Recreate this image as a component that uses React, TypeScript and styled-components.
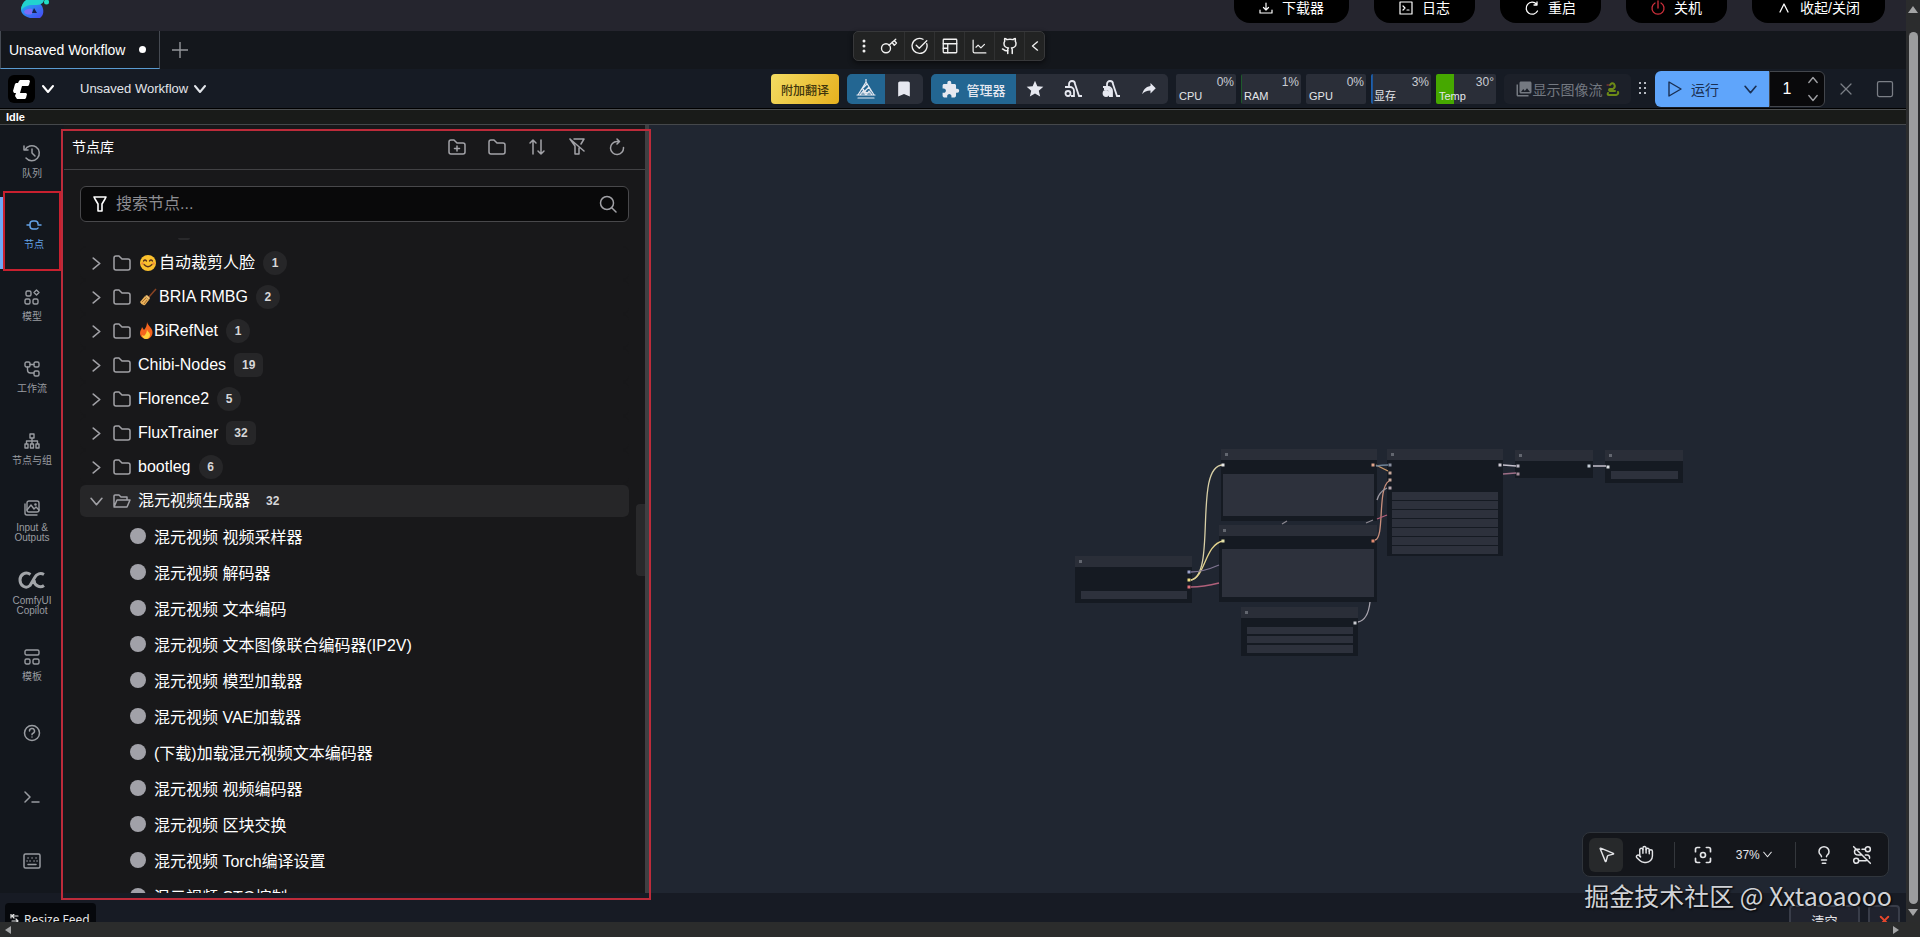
import React from "react";
import styled, { createGlobalStyle, css } from "styled-components";
import {
  ChartLine, Github, Hand, Lightbulb, X, Square, MousePointer2,
} from "lucide-react";
import { MdBookmark, MdExtension, MdStar, MdPhotoLibrary } from "react-icons/md";

const GlobalStyle = createGlobalStyle`
  * { box-sizing: border-box; }
  body { margin: 0; background: #14171d; overflow: hidden; }
  button, input { font: inherit; color: inherit; }
  button { border: 0; padding: 0; background: none; cursor: pointer; }
  svg { display: block; flex: none; }
`;

/* ---------- page frame ---------- */

const Viewport = styled.div`
  display: grid;
  grid-template-columns: minmax(0, 1fr) 14px;
  grid-template-rows: minmax(0, 1fr) 15px;
  height: 100vh;
  color: #fff;
  font-family: "Liberation Sans", "Noto Sans CJK SC", sans-serif;
`;

const Page = styled.div`
  display: flex;
  flex-direction: column;
  min-height: 0;
  overflow: hidden;
`;

const VerticalScroll = styled.div`
  display: flex;
  flex-direction: column;
  align-items: center;
  justify-content: space-between;
  padding: 6px 0;
  background: #2b2c2d;
`;

const VerticalThumb = styled.div`
  flex: 1;
  width: 9px;
  margin: 18px 0 4px;
  border-radius: 5px;
  background: #9c9d9e;
`;

const HorizontalScroll = styled.div`
  grid-column: 1 / -1;
  display: flex;
  align-items: center;
  justify-content: space-between;
  padding: 0 19px 0 3px;
  background: #2b2c2c;
`;

/* ---------- top bar ---------- */

const TopBar = styled.header`
  display: flex;
  align-items: flex-start;
  justify-content: space-between;
  flex: none;
  height: 31px;
  padding: 0 21px 0 20px;
  background: #25252e;
`;

const TopActions = styled.nav`
  display: flex;
  gap: 25px;
`;

const TopButton = styled.button`
  display: flex;
  align-items: flex-end;
  gap: 8px;
  height: 23px;
  padding: 0 25px 7px 24px;
  border-radius: 0 0 16px 16px;
  background: #000;
  font-size: 14px;
  line-height: 16px;
  white-space: nowrap;
`;

/* ---------- tabs ---------- */

const TabBar = styled.div`
  display: grid;
  grid-template-columns: minmax(0, 1fr) auto minmax(0, 1fr);
  flex: none;
  height: 38px;
  padding-right: 8px;
  background: #14171c;
`;

const TabGroup = styled.div`
  display: flex;
  align-items: center;
`;

const Tab = styled.button`
  display: flex;
  align-items: center;
  gap: 14px;
  height: 38px;
  width: 160px;
  padding: 0 8px;
  border: 1px solid #454a52;
  border-top: 0;
  border-bottom: 1px solid #5a9bd0;
  font-size: 14px;
  line-height: 16px;
  white-space: nowrap;
`;

const UnsavedDot = styled.span`
  width: 7px;
  height: 7px;
  border-radius: 50%;
  background: #fff;
`;

const AddTab = styled.button`
  margin-left: 12px;
  color: #94979b;
`;

const FloatingTools = styled.div`
  display: flex;
  align-items: center;
  align-self: start;
  height: 30px;
  border: 1px solid #37383a;
  border-radius: 5px;
  background: #222323;
  box-shadow: 0 2px 5px #0a0b0d;
`;

const FloatingButton = styled.button<{ $narrow?: boolean }>`
  display: flex;
  align-items: center;
  justify-content: center;
  width: ${(p) => (p.$narrow ? 20 : 30)}px;
  height: 28px;
  color: #f1f1f1;
  & + & { border-left: 1px solid #303132; }
  &:nth-child(2) { border-left: 0; }
`;

/* ---------- menu bar ---------- */

const MenuBar = styled.div`
  display: flex;
  align-items: center;
  flex: none;
  height: 40px;
  padding-right: 11px;
  padding-left: 8px;
  background: #161b24;
`;

const ComfyMenu = styled.button`
  display: flex;
  align-items: center;
  gap: 7px;
  margin-right: 26px;
`;

const ComfyLogo = styled.span`
  display: flex;
  align-items: center;
  justify-content: center;
  width: 27px;
  height: 28px;
  border-radius: 6px;
  background: #000;
`;

const WorkflowMenu = styled.button`
  display: flex;
  align-items: center;
  gap: 6px;
  color: #e2e5ea;
  font-size: 13px;
  line-height: 16px;
`;

const MenuRight = styled.div`
  display: flex;
  align-items: center;
  gap: 8px;
  margin-left: auto;
`;

const TranslateButton = styled.button`
  width: 68px;
  height: 30px;
  border-radius: 4px;
  background: linear-gradient(120deg, #f3dc62, #e6b01f);
  color: #40350c;
  font-size: 12px;
  font-weight: 500;
`;

const ToolGroup = styled.div`
  display: flex;
  overflow: hidden;
  border-radius: 5px;
  background: #2a2e38;
`;

const ToolButton = styled.button<{ $primary?: boolean; $wide?: boolean }>`
  display: flex;
  align-items: center;
  justify-content: center;
  gap: 6px;
  width: ${(p) => (p.$wide ? 85 : 38)}px;
  height: 30px;
  background: ${(p) => (p.$primary ? "#236692" : "transparent")};
  color: #e6e8f0;
  font-size: 13px;
  font-weight: 500;
  white-space: nowrap;
`;

const Monitors = styled.div`
  display: flex;
  gap: 5px;
`;

const Monitor = styled.div<{ $fill: number; $tone: string }>`
  display: grid;
  align-content: space-between;
  width: 60px;
  height: 30px;
  padding: 2px 2px 1px 3px;
  border-radius: 2px;
  background:
    linear-gradient(${(p) => p.$tone}, ${(p) => p.$tone}) left / ${(p) => p.$fill}% 100% no-repeat,
    #2a2e38;
  color: #e4e6ea;
  font-size: 11px;
  line-height: 13px;
  white-space: nowrap;
`;

const MonitorValue = styled.span`
  justify-self: end;
  color: #c9ccd3;
  font-size: 12px;
`;

const FeedButton = styled.button`
  display: flex;
  align-items: center;
  justify-content: center;
  width: 127px;
  height: 30px;
  border-radius: 5px;
  background: #1c2029;
  color: #747981;
  font-size: 14px;
  white-space: nowrap;
`;

const RunGroup = styled.div`
  display: flex;
  align-items: center;
`;

const RunButton = styled.button`
  display: flex;
  align-items: center;
  width: 114px;
  height: 36px;
  padding: 0 12px;
  border-radius: 6px 0 0 6px;
  background: #5fa5fb;
  color: #1a2f52;
  font-size: 14px;
  & > span { flex: 1; padding-left: 8px; text-align: left; }
`;

const BatchField = styled.label`
  display: flex;
  align-items: center;
  justify-content: space-between;
  width: 56px;
  height: 36px;
  padding: 0 6px 0 0;
  border: 1px solid #43464c;
  border-radius: 0 6px 6px 0;
  background: #09090b;
`;

const BatchInput = styled.input`
  width: 34px;
  padding: 0;
  border: 0;
  outline: 0;
  background: none;
  font-size: 16px;
  text-align: center;
`;

const Stepper = styled.span`
  display: grid;
  gap: 8px;
  color: #a0a1a5;
`;

const QueueControls = styled.div`
  display: flex;
  gap: 19px;
  margin-left: 3px;
  color: #7b7f86;
`;

const StatusBar = styled.div`
  flex: none;
  height: 16px;
  padding-left: 6px;
  border-top: 1px solid #4b4e50;
  border-bottom: 1px solid #45484b;
  background: #191b19;
  box-shadow: 0 -1px #000;
  font-size: 11px;
  font-weight: bold;
  line-height: 15px;
`;

/* ---------- workspace ---------- */

const Workspace = styled.main`
  display: flex;
  flex: 1;
  min-height: 0;
`;

const Sidebar = styled.nav`
  display: flex;
  flex-direction: column;
  flex: none;
  width: 64px;
  background: #13171d;
`;

const SideItem = styled.button<{ $active?: boolean; $small?: boolean }>`
  position: relative;
  display: flex;
  flex-direction: column;
  align-items: center;
  justify-content: center;
  gap: 7px;
  height: ${(p) => (p.$small ? 64 : 72)}px;
  color: #999ca1;
  font-size: 10px;
  line-height: 10px;
  ${(p) => p.$active && css`
    padding-left: 4px;
    box-shadow: inset 3px 0 #6fa8f5;
    color: #64a2e6;
  `}
`;

const SideMarker = styled.span`
  position: absolute;
  inset: -6px 3px -2px 3px;
  border: 2px solid #c8202f;
  pointer-events: none;
`;

const PanelMarker = styled.span`
  position: absolute;
  z-index: 2;
  inset: 4px -6px -7px -3px;
  border: 2px solid #bd2b3a;
  pointer-events: none;
`;

const PanelShell = styled.section`
  position: relative;
  display: flex;
  flex: none;
  width: 585px;
  border-right: 4px solid #3f3f42;
`;

const Panel = styled.div`
  position: relative;
  display: flex;
  flex: 1;
  flex-direction: column;
  min-width: 0;
  overflow: hidden;
  background: #18181a;
`;

const PanelHeader = styled.div`
  display: flex;
  align-items: center;
  justify-content: space-between;
  flex: none;
  height: 45px;
  padding: 0 19px 0 8px;
  border-bottom: 1px solid #414144;
`;

const PanelTitle = styled.h2`
  margin: 0;
  font-size: 14px;
  font-weight: 400;
  line-height: 20px;
`;

const PanelTools = styled.div`
  display: flex;
  gap: 22px;
  color: #a3a3a8;
`;

const SearchField = styled.label`
  display: flex;
  align-items: center;
  gap: 8px;
  flex: none;
  height: 36px;
  margin: 16px 16px 0;
  padding: 0 11px;
  border: 1px solid #48484b;
  border-radius: 6px;
  background: #09090a;
  color: #a1a1a6;
`;

const SearchInput = styled.input`
  flex: 1;
  min-width: 0;
  border: 0;
  padding: 0;
  outline: 0;
  background: none;
  font-size: 16px;
  &::placeholder { color: #8d8d92; opacity: 1; }
`;

/* The bar before the first row is the tail of a count badge scrolled out of view. */
const Tree = styled.ul`
  flex: 1;
  min-height: 0;
  margin: 16px 16px 0;
  padding: 0;
  overflow: hidden;
  list-style: none;
  font-size: 16px;
  line-height: 20px;
  &::before {
    content: "";
    display: block;
    width: 12px;
    height: 2px;
    margin: 0 0 6px 98px;
    border-radius: 0 0 6px 6px;
    background: #29292b;
  }
`;

const Branch = styled.li<{ $open?: boolean }>`
  display: flex;
  align-items: center;
  height: 34px;
  padding-left: 10px;
  border-top: 1px solid #18181a;
  border-bottom: 1px solid #18181a;
  border-radius: 6px;
  background: ${(p) => (p.$open ? "#262628" : "transparent")};
  color: #a1a1a6;
`;

const BranchLabel = styled.span<{ $emoji?: boolean }>`
  display: flex;
  align-items: center;
  margin-left: ${(p) => (p.$emoji ? 9 : 7)}px;
  color: #fff;
  white-space: nowrap;
`;

const Count = styled.span<{ $round?: boolean; $plain?: boolean }>`
  min-width: 24px;
  height: 24px;
  margin-left: 8px;
  padding: 0 ${(p) => (p.$round ? 0 : 8)}px;
  border-radius: ${(p) => (p.$round ? 12 : 6)}px;
  background: ${(p) => (p.$plain ? "transparent" : "#262628")};
  color: #d6d6d8;
  font-size: 12px;
  font-weight: bold;
  line-height: 24px;
  text-align: center;
`;

const FolderSlot = styled.span`
  margin-left: 10px;
`;

const Leaf = styled.li`
  display: flex;
  align-items: center;
  gap: 8px;
  height: 36px;
  padding-left: 50px;
  white-space: nowrap;
  &::before {
    content: "";
    width: 16px;
    height: 16px;
    border-radius: 50%;
    background: #a1a1a8;
  }
  & > span { padding-top: 3px; }
`;

const TreeThumb = styled.span`
  position: absolute;
  top: 379px;
  right: 0;
  width: 9px;
  height: 72px;
  border-radius: 4px 0 0 4px;
  background: #29292b;
`;

const Canvas = styled.section`
  position: relative;
  flex: 1;
  min-width: 0;
  background: #202631;
`;

const Graph = styled.svg`
  position: absolute;
  top: 305px;
  right: 206px;
`;

const CanvasTools = styled.div`
  position: absolute;
  right: 17px;
  bottom: 16px;
  display: flex;
  align-items: center;
  width: 307px;
  height: 45px;
  padding: 0 6px;
  border: 1px solid #30353c;
  border-radius: 8px;
  background: #14161b;
  color: #e4e5e8;
`;

const CanvasButton = styled.button<{ $on?: boolean; $width?: number }>`
  display: flex;
  align-items: center;
  justify-content: center;
  gap: 3px;
  width: ${(p) => p.$width ?? 35}px;
  height: 34px;
  border-radius: 6px;
  background: ${(p) => (p.$on ? "#27292b" : "transparent")};
  font-size: 12px;
`;

const Divider = styled.span`
  width: 1px;
  height: 26px;
  margin: 0 9px;
  background: #34373c;
`;

/* ---------- bottom strip ---------- */

const BottomBar = styled.footer`
  display: flex;
  align-items: flex-start;
  justify-content: space-between;
  flex: none;
  height: 29px;
  padding: 0 6px 0 5px;
  overflow: hidden;
  background: #171b24;
`;

const ResizeFeed = styled.button`
  display: flex;
  align-items: center;
  gap: 4px;
  height: 32px;
  width: 91px;
  margin-top: 10px;
  padding: 0 5px;
  border-radius: 4px;
  background: #06080c;
  color: #e4e4e4;
  font-family: "Noto Sans", sans-serif;
  font-size: 12px;
  white-space: nowrap;
`;

const FeedActions = styled.div`
  display: flex;
  gap: 8px;
  margin-top: 12px;
`;

const FeedAction = styled.button<{ $close?: boolean }>`
  display: flex;
  align-items: center;
  justify-content: center;
  width: ${(p) => (p.$close ? 32 : 71)}px;
  height: 30px;
  border: 2px solid #393d49;
  border-radius: 4px;
  background: #20232e;
  color: ${(p) => (p.$close ? "#e8472c" : "#e4e4e8")};
  font-size: 13px;
`;

const Watermark = styled.div`
  position: absolute;
  z-index: 3;
  right: 14px;
  bottom: -20px;
  color: #d0d2d6;
  font-family: "Noto Sans CJK SC", sans-serif;
  font-size: 25px;
  line-height: 36px;
  text-shadow: 1px 1px 2px #000;
  white-space: nowrap;
`;

/* ---------- icons ---------- */

type IconProps = { size?: number; children: React.ReactNode; width?: number; box?: string };

const Line = ({ size = 16, width = 2, box = "0 0 24 24", children }: IconProps) => (
  <svg width={size} height={size} viewBox={box} fill="none" stroke="currentColor" strokeWidth={width} strokeLinecap="round" strokeLinejoin="round" aria-hidden="true">
    {children}
  </svg>
);

const Chevron = ({ dir, size = 12, width = 2 }: { dir: "up" | "down" | "left" | "right"; size?: number; width?: number }) => {
  const d = { up: "M1 9l5-6 5 6", down: "M1 3l5 6 5-6", left: "M9 1L3 6l6 5", right: "M3 1l6 5-6 5" }[dir];
  return <Line size={size} width={width} box="0 0 12 12"><path d={d} /></Line>;
};

const Arrow = ({ d }: { d: string }) => (
  <svg width="10" height="8" viewBox="0 0 10 8" fill="#a4a5a6" aria-hidden="true"><path d={d} /></svg>
);

const BrandLogo = () => (
  <svg width="30" height="19" viewBox="0 0 30 19" aria-hidden="true">
    <defs>
      <linearGradient id="brand" x1="0" y1="0" x2="1" y2="1">
        <stop offset="0" stopColor="#1cb4ef" />
        <stop offset="1" stopColor="#4a46f5" />
      </linearGradient>
    </defs>
    <path d="M6 2C1 5 0 10 2 13c2 3 5 4 8 5h10c4-3 4-8 2-12l-3-4z" fill="url(#brand)" />
    <path d="M6 0h18c-1 5-6 5-11 5-6 0-9 2-12 5C1 6 3 2 6 0z" fill="#22d3cf" />
    <circle cx="26.500" cy="2" r="2.500" fill="#20dfc4" />
    <path d="M12 9c-3-1-8 1-8 3 1 3 6 3 8 2z" fill="#7b6cf6" />
    <path d="M14 8l3 5h-5z" fill="#17204c" />
  </svg>
);

const DownloadIcon = () => <Line size={16} width={1.2} box="0 0 16 16"><path d="M2 10v3h12v-3M8 3v7M5.500 7.500L8 10l2.500-2.500" /></Line>;
const LogIcon = () => <Line size={16} width={1.2} box="0 0 16 16"><path d="M2 2h12v12H2zM5 6l2 2-2 2M9 10h2" /></Line>;
const RestartIcon = () => <Line size={16} width={1.3} box="0 0 16 16"><path d="M13.500 11a6 6 0 1 1-1-7M13 2v3h-3" /></Line>;
const PowerIcon = () => (
  <svg width="16" height="16" viewBox="0 0 16 16" fill="none" stroke="#d0303c" strokeWidth="1.3" strokeLinecap="round" aria-hidden="true">
    <path d="M5 3a6 6 0 1 0 6 0M8 1v7" />
  </svg>
);

const FolderShape = ({ plus }: { plus?: boolean }) => (
  <Line size={18} width={1.5} box="0 0 18 18">
    <path d="M1 4a2 2 0 0 1 2-2h3l3 3h6a2 2 0 0 1 2 2v7a2 2 0 0 1-2 2H3a2 2 0 0 1-2-2z" />
    {plus && <path d="M9 8v5M6.500 10.500h5" />}
  </Line>
);
const FolderOpenShape = () => (
  <Line size={18} width={1.5} box="0 0 18 18">
    <path d="M1 14V4a1 1 0 0 1 1-1h4l2 2h6v3M1 15l3-7h13l-3 7z" />
  </Line>
);
const SortIcon = () => <Line size={18} width={1.5} box="0 0 18 18"><path d="M5 16V2M2 5l3-3 3 3M13 2v14M10 13l3 3 3-3" /></Line>;
const FilterSlashIcon = () => <Line size={18} width={1.5} box="0 0 18 18"><path d="M6 1h10l-3 5M2 1l5 7v8h4v-6M2 1l14 12" /></Line>;
const ReloadIcon = () => <Line size={18} width={1.5} box="0 0 18 18"><path d="M15.500 9.500a6.500 6.500 0 1 1-6.500-6h2M9 1l2.500 2.500L9 6" /></Line>;
const FilterIcon = () => (
  <svg width="16" height="16" viewBox="0 0 16 16" fill="none" stroke="#fff" strokeWidth="1.600" strokeLinejoin="round" aria-hidden="true"><path d="M2 1h12l-1 2-3 5v7H6V8L3 3z" /></svg>
);
const SearchIcon = () => <Line size={18} width={1.5} box="0 0 18 18"><circle cx="8" cy="8" r="6.500" /><path d="M13 13l4 4" /></Line>;

const HistoryIcon = () => <Line size={18} width={1.5} box="0 0 18 18"><path d="M1 2v4h4M2 6a7.500 7.500 0 1 1 1 8M9 5v4l3 3" /></Line>;
const NodeIcon = () => <Line size={16} width={1.5} box="0 0 16 16"><path d="M1 8h3M12 8h3M12 7a3 3 0 0 0-3-3H7a3 3 0 0 0-3 3v2a3 3 0 0 0 3 3h3a2 2 0 0 0 2-1" /></Line>;
const ModelIcon = () => <Line size={16} width={1.4} box="0 0 16 16"><rect x="2" y="2" width="5" height="5" rx="1.500" /><rect x="1" y="10" width="5" height="5" rx="1.500" /><rect x="9" y="10" width="5" height="5" rx="1.500" /><path d="M12.500 1l2.500 2.500L12.500 6 10 3.500z" /></Line>;
const FlowIcon = () => <Line size={16} width={1.4} box="0 0 16 16"><rect x="1" y="1" width="5" height="5" rx="1.500" /><rect x="10" y="1" width="5" height="5" rx="1.500" /><rect x="10" y="10" width="5" height="5" rx="1.500" /><path d="M3.500 6v3a3 3 0 0 0 3 3H10M6 3.500h4" /></Line>;
const GroupIcon = () => <Line size={16} width={1.4} box="0 0 16 16"><path d="M6 1h4v4H6zM1 11h3v4H1zM6.500 11h3v4h-3zM12 11h3v4h-3zM8 5v6M2.500 11V8h11v3" /></Line>;
const ImagesIcon = () => <Line size={16} width={1.4} box="0 0 16 16"><rect x="3" y="1" width="12" height="11" rx="2" /><path d="M1 4v9a2 2 0 0 0 2 2h10M3 10l4-5 3 4 2-2 3 3" /><circle cx="11.500" cy="4.500" r=".6" /></Line>;
const CopilotIcon = () => (
  <svg width="28" height="18" viewBox="0 0 28 18" fill="none" stroke="#a2a5a9" strokeWidth="3" aria-hidden="true">
    <path d="M12.500 3.500C7.500 0 2 3.500 2 9s5.500 9.500 10 5.500L17 6c1.500-3 5.500-4.500 9-2.500M26 14.500c-4 3-10 0-10-5.500" />
  </svg>
);
const TemplateIcon = () => <Line size={16} width={1.4} box="0 0 16 16"><rect x="1" y="1" width="14" height="5" rx="1.500" /><rect x="1" y="10" width="5" height="5" rx="1.500" /><rect x="9" y="10" width="6" height="5" rx="1.500" /></Line>;
const HelpIcon = () => <Line size={18} width={1.5} box="0 0 18 18"><circle cx="9" cy="9" r="7.500" /><path d="M6.500 7a2.500 2.500 0 1 1 3.500 2.200q-1 .4-1 1.500M9 13v.1" /></Line>;
const PromptIcon = () => <Line size={16} width={1.5} box="0 0 16 16"><path d="M1 3l5 5-5 5M8 13h7" /></Line>;
const KeyboardIcon = () => <Line size={18} width={1.5} box="0 0 18 18"><rect x="1" y="2" width="16" height="14" rx="1.500" /><path d="M5 6h.1M9 6h.1M13 6h.1M4 9h.1M7 9h.1M11 9h.1M14 9h.1M5 12.500h8" /></Line>;

const KeyIcon = () => <Line size={18} width={1.8}><circle cx="8" cy="15" r="6" /><path d="M12 11L21 3M16 7l3 4 3-3-3-3" /></Line>;
const CheckRingIcon = () => <Line size={18} width={1.8}><path d="M21 9a10 10 0 1 1-5-6M7 11l4 4L21 5" /></Line>;
const LayoutIcon = () => <Line size={18} width={1.7}><rect x="3" y="3" width="18" height="18" rx="1" /><path d="M3 9h18M9 9v12M3 15h6" /></Line>;
const DotsIcon = () => <svg width="4" height="16" viewBox="0 0 4 16" fill="#eee" aria-hidden="true"><circle cx="2" cy="3" r="1.500" /><circle cx="2" cy="8" r="1.500" /><circle cx="2" cy="13" r="1.500" /></svg>;

const CompassIcon = () => (
  <Line size={20} width={1.2} box="0 0 20 20">
    <path d="M10 0v3M10 3L2 16M10 3l8 13M1 16h18M2 19h16M5 11l6-6M7 8q0 6 6 6M9 12l4-4 2 4M5 14h10M4 16l3-4 3 4 3-4 3 4" />
  </Line>
);
const VacuumIcon = ({ solid }: { solid?: boolean }) => (
  <svg width="18" height="18" viewBox="0 0 18 18" fill="none" stroke="#e6e8f0" strokeWidth="1.800" aria-hidden="true">
    <path d="M5 6V4a3 3 0 0 1 6 0l4 12h3M1 7h5a4 4 0 0 1 4 4v5H7" />
    <circle cx="4" cy="13.500" r="2.500" fill={solid ? "#e6e8f0" : "none"} />
    {solid && <path d="M2 8.500h4l2.500 2.500v5" strokeWidth="3" />}
  </svg>
);
const ShareIcon = () => <svg width="18" height="18" viewBox="0 0 24 24" fill="currentColor" aria-hidden="true"><path d="M21 11l-7-7v4C7 9 4 14 3 19c2.500-3.500 6-5.100 11-5.100V18z" /></svg>;
const SnakeIcon = () => (
  <svg width="14" height="16" viewBox="0 0 14 16" fill="none" stroke="#6d8a17" strokeWidth="2" strokeLinecap="round" aria-hidden="true">
    <path d="M4 4q2-3 4-1 2 3-1 5H4q-2 1 0 2h5M2 12q-1 2 1 2h7q3-1 2-3" /><path d="M1 4h2" stroke="#a43a3a" strokeWidth="1" />
  </svg>
);
const GripIcon = () => (
  <svg width="8" height="16" viewBox="0 0 8 16" fill="#b6bac2" aria-hidden="true">
    {[1, 6, 11].map((y) => <path key={y} d={`M0 ${y}h2v2H0zM5 ${y}h2v2H5z`} />)}
  </svg>
);
const ComfyMark = () => (
  <svg width="17" height="19" viewBox="0 0 17 19" fill="#fff" aria-hidden="true">
    <path d="M7 0h9l1 1-1 4-1 1H9L7 13h6l1 1-1 4-1 1H4l-2-3 1-3H1l-1-2 2-7 1-1h2l1-2z" />
  </svg>
);
const FocusIcon = () => <Line size={20} width={2}><path d="M3 8V5a2 2 0 0 1 2-2h3M16 3h3a2 2 0 0 1 2 2v3M21 16v3a2 2 0 0 1-2 2h-3M8 21H5a2 2 0 0 1-2-2v-3" /><circle cx="12" cy="12" r="3" /></Line>;
const LinkOffIcon = () => <Line size={20} width={1.8}><circle cx="19" cy="5" r="3" /><circle cx="5" cy="19" r="3" /><path d="M2 2l20 20M9 5H6a3 3 0 0 0-3 3c0 3 2 4 5 4h3M12 5h4M16 12h2a3 3 0 0 1 3 4M8 19h9" /></Line>;

const FaceEmoji = () => (
  <svg width="19" height="18" viewBox="0 0 19 18" aria-hidden="true">
    <circle cx="8" cy="9" r="8" fill="#fbc12d" />
    <g fill="none" stroke="#59331c" strokeWidth="1.300" strokeLinecap="round"><path d="M3.500 7q1.500-2 3 0M9.500 7q1.500-2 3 0M4 10.500q4 4.500 8 0" /></g>
    <circle cx="2.500" cy="9.500" r="1.200" fill="#f08a3c" /><circle cx="13.500" cy="9.500" r="1.200" fill="#f08a3c" />
  </svg>
);
const BroomEmoji = () => (
  <svg width="19" height="18" viewBox="0 0 19 18" aria-hidden="true">
    <path d="M8 10l8-9" stroke="#8a4424" strokeWidth="1.500" /><path d="M5 8l4 4-4 5q-3 1-5-3z" fill="#e9b15a" />
    <path d="M2 14l4-4M4 16l3-4" stroke="#a96f2c" /><path d="M5 8l2-1 3 3-1 2z" fill="#f0c070" />
  </svg>
);
const FireEmoji = () => (
  <svg width="14" height="18" viewBox="0 0 14 18" aria-hidden="true">
    <path d="M7 0c1 4 6 6 5.500 11C12 15 9 17 6.500 17S0 15 0 11c0-3 2-4 2-6l2 3c2-2 3-5 3-8z" fill="#f4641e" />
    <path d="M7 7c0 3 3 3 3 6 0 2-2 4-4 4s-4-2-4-4l2 1c2-2 3-4 3-7z" fill="#fed13b" />
  </svg>
);

/* ---------- node graph ---------- */

const ports: [number, number, string][] = [
  [114, 142, "#9aa0c8"], [114, 150, "#f0df85"], [114, 157, "#e0707a"],
  [148, 35, "#e6e6e6"], [298, 35, "#e0a58c"], [148, 111, "#e2e0a8"], [298, 111, "#e08a70"],
  [280, 193, "#c8cad0"], [315, 35, "#8a90a0"], [315, 43, "#c8a89a"], [315, 50, "#c8a89a"], [315, 58, "#b8a8b0"],
  [425, 35, "#d0ccd6"], [443, 36, "#c0bcc8"], [443, 44, "#a88f9c"], [514, 36, "#c6ced8"], [533, 37, "#dadde2"],
];

const boxes: { x: number; y: number; w: number; h: number; widgets: [number, number, number, number][] }[] = [
  { x: 0, y: 126, w: 117, h: 47, widgets: [[6, 35, 106, 8]] },
  { x: 146, y: 19, w: 156, h: 72, widgets: [[2, 25, 151, 42]] },
  { x: 144, y: 95, w: 158, h: 77, widgets: [[3, 24, 152, 48]] },
  { x: 166, y: 177, w: 117, h: 49, widgets: [[6, 20, 106, 7], [6, 29, 106, 7], [6, 38, 106, 8]] },
  { x: 312, y: 19, w: 116, h: 107, widgets: [0, 1, 2, 3, 4, 5, 6].map((i) => [5, 43 + i * 9, 106, 8]) as [number, number, number, number][] },
  { x: 440, y: 20, w: 78, h: 28, widgets: [] },
  { x: 530, y: 20, w: 78, h: 33, widgets: [[6, 21, 67, 8]] },
];

const NodeGraph = () => (
  <Graph width="625" height="240" viewBox="0 0 625 240" role="img" aria-label="Workflow graph">
    {boxes.map((b) => (
      <g key={`${b.x}-${b.y}`}>
        <rect x={b.x} y={b.y} width={b.w} height={b.h} fill="#151a22" />
        <rect x={b.x} y={b.y} width={b.w} height="11" fill="#2a2e38" />
        <rect x={b.x + 4} y={b.y + 4} width="3" height="3" fill="#62666f" />
        {b.widgets.map(([x, y, w, h]) => (
          <rect key={y} x={b.x + x} y={b.y + y} width={w} height={h} fill="#2d313c" />
        ))}
      </g>
    ))}
    <g fill="none" strokeWidth="1.300">
      <path d="M116 150C142 145 118 35 148 35" stroke="#d8cfa6" />
      <path d="M116 150C130 148 130 114 148 111" stroke="#e3d38c" />
      <path d="M116 142q12 0 28-7" stroke="#7d7390" />
      <path d="M116 157q12 0 28-4" stroke="#b0607a" />
      <path d="M301 35l12 6" stroke="#d09c68" /><path d="M301 36q6-1 12-1" stroke="#6e8296" />
      <path d="M300 110C310 108 302 58 314 51" stroke="#c98f7c" />
      <path d="M302 70q2-8 10-12" stroke="#9c98a0" /><path d="M302 89l10-4" stroke="#b5607a" />
      <path d="M207 94l5-3M291 93l7-3" stroke="#8b8790" />
      <path d="M283 192q10-2 12-20" stroke="#a6a2ac" />
      <path d="M428 35l13 1M518 36h13" stroke="#c4c0cc" /><path d="M428 44l13-1" stroke="#9d6e86" />
    </g>
    {ports.map(([x, y, c]) => <rect key={`${x}-${y}`} x={x - 1.5} y={y - 1.5} width="3" height="3" fill={c} />)}
  </Graph>
);

/* ---------- data ---------- */

const folders: { label: string; count: number; emoji?: React.ReactNode }[] = [
  { label: "自动裁剪人脸", count: 1, emoji: <FaceEmoji /> },
  { label: "BRIA RMBG", count: 2, emoji: <BroomEmoji /> },
  { label: "BiRefNet", count: 1, emoji: <FireEmoji /> },
  { label: "Chibi-Nodes", count: 19 },
  { label: "Florence2", count: 5 },
  { label: "FluxTrainer", count: 32 },
  { label: "bootleg", count: 6 },
];

const leaves = [
  "混元视频 视频采样器", "混元视频 解码器", "混元视频 文本编码", "混元视频 文本图像联合编码器(IP2V)",
  "混元视频 模型加载器", "混元视频 VAE加载器", "(下载)加载混元视频文本编码器", "混元视频 视频编码器",
  "混元视频 区块交换", "混元视频 Torch编译设置", "混元视频 STG控制",
];

const sideItems: { label: React.ReactNode; icon: React.ReactNode; active?: boolean }[] = [
  { label: "队列", icon: <HistoryIcon /> },
  { label: "节点", icon: <NodeIcon />, active: true },
  { label: "模型", icon: <ModelIcon /> },
  { label: "工作流", icon: <FlowIcon /> },
  { label: "节点与组", icon: <GroupIcon /> },
  { label: <>Input &amp;<br />Outputs</>, icon: <ImagesIcon /> },
  { label: <>ComfyUI<br />Copilot</>, icon: <CopilotIcon /> },
  { label: "模板", icon: <TemplateIcon /> },
];

const monitors = [
  { label: "CPU", value: "0%", fill: 0, tone: "#2a2e38" },
  { label: "RAM", value: "1%", fill: 2, tone: "#1e5a2c" },
  { label: "GPU", value: "0%", fill: 0, tone: "#2a2e38" },
  { label: "显存", value: "3%", fill: 3, tone: "#1c5fae" },
  { label: "Temp", value: "30°", fill: 30, tone: "#46a800" },
];

export default function App() {
  return (
    <Viewport>
      <GlobalStyle />
      <Page>
        <TopBar>
          <BrandLogo />
          <TopActions>
            <TopButton><DownloadIcon />下载器</TopButton>
            <TopButton><LogIcon />日志</TopButton>
            <TopButton><RestartIcon />重启</TopButton>
            <TopButton><PowerIcon />关机</TopButton>
            <TopButton><Line size={16} width={1.3} box="0 0 16 16"><path d="M4 12l4-8 4 8" /></Line>收起/关闭</TopButton>
          </TopActions>
        </TopBar>

        <TabBar>
          <TabGroup>
            <Tab>Unsaved Workflow<UnsavedDot /></Tab>
            <AddTab aria-label="New workflow"><Line size={16} width={1.4} box="0 0 16 16"><path d="M8 0v16M0 8h16" /></Line></AddTab>
          </TabGroup>
          <FloatingTools>
            <FloatingButton $narrow aria-label="Move"><DotsIcon /></FloatingButton>
            <FloatingButton aria-label="Key"><KeyIcon /></FloatingButton>
            <FloatingButton aria-label="Check"><CheckRingIcon /></FloatingButton>
            <FloatingButton aria-label="Layout"><LayoutIcon /></FloatingButton>
            <FloatingButton aria-label="Chart"><ChartLine size={17} strokeWidth={1.7} /></FloatingButton>
            <FloatingButton aria-label="Github"><Github size={18} strokeWidth={2} /></FloatingButton>
            <FloatingButton $narrow aria-label="Collapse"><Chevron dir="left" size={10} width={1.6} /></FloatingButton>
          </FloatingTools>
        </TabBar>

        <MenuBar>
          <ComfyMenu aria-label="Menu"><ComfyLogo><ComfyMark /></ComfyLogo><Chevron dir="down" size={12} /></ComfyMenu>
          <WorkflowMenu>Unsaved Workflow<Chevron dir="down" size={12} /></WorkflowMenu>
          <MenuRight>
            <TranslateButton>附加翻译</TranslateButton>
            <ToolGroup>
              <ToolButton $primary aria-label="Compass"><CompassIcon /></ToolButton>
              <ToolButton aria-label="Bookmark"><MdBookmark size={20} /></ToolButton>
            </ToolGroup>
            <ToolGroup>
              <ToolButton $primary $wide><MdExtension size={19} />管理器</ToolButton>
              <ToolButton aria-label="Favorites"><MdStar size={20} /></ToolButton>
              <ToolButton aria-label="Unload models"><VacuumIcon /></ToolButton>
              <ToolButton aria-label="Free memory"><VacuumIcon solid /></ToolButton>
              <ToolButton aria-label="Share"><ShareIcon /></ToolButton>
            </ToolGroup>
            <Monitors>
              {monitors.map((m) => (
                <Monitor key={m.label} $fill={m.fill} $tone={m.tone}>
                  <MonitorValue>{m.value}</MonitorValue>
                  <span>{m.label}</span>
                </Monitor>
              ))}
            </Monitors>
            <FeedButton><MdPhotoLibrary size={18} />显示图像流&nbsp;<SnakeIcon /></FeedButton>
            <GripIcon />
            <RunGroup>
              <RunButton>
                <Line size={16} width={1.4} box="0 0 16 16"><path d="M2 1v14l12-7z" /></Line>
                <span>运行</span>
                <Chevron dir="down" size={13} width={1.5} />
              </RunButton>
              <BatchField>
                <BatchInput defaultValue="1" aria-label="Batch count" />
                <Stepper><Chevron dir="up" size={10} width={1.6} /><Chevron dir="down" size={10} width={1.6} /></Stepper>
              </BatchField>
            </RunGroup>
            <QueueControls><X size={20} strokeWidth={1.5} /><Square size={20} strokeWidth={1.5} /></QueueControls>
          </MenuRight>
        </MenuBar>
        <StatusBar>Idle</StatusBar>

        <Workspace>
          <Sidebar>
            {sideItems.map((item, i) => (
              <SideItem key={i} $active={item.active}>
                {item.icon}
                <span>{item.label}</span>
                {item.active && <SideMarker />}
              </SideItem>
            ))}
            <SideItem $small aria-label="Help"><HelpIcon /></SideItem>
            <SideItem $small aria-label="Terminal"><PromptIcon /></SideItem>
            <SideItem $small aria-label="Shortcuts"><KeyboardIcon /></SideItem>
          </Sidebar>

          <PanelShell>
            <Panel>
              <PanelHeader>
                <PanelTitle>节点库</PanelTitle>
                <PanelTools>
                  <button aria-label="New folder"><FolderShape plus /></button>
                  <button aria-label="Folder"><FolderShape /></button>
                  <button aria-label="Sort"><SortIcon /></button>
                  <button aria-label="Clear filter"><FilterSlashIcon /></button>
                  <button aria-label="Refresh"><ReloadIcon /></button>
                </PanelTools>
              </PanelHeader>
              <SearchField>
                <FilterIcon />
                <SearchInput placeholder="搜索节点..." aria-label="搜索节点" />
                <SearchIcon />
              </SearchField>
              <Tree>
                {folders.map((f) => (
                  <Branch key={f.label}>
                    <Chevron dir="right" size={13} width={1.5} />
                    <FolderSlot><FolderShape /></FolderSlot>
                    <BranchLabel $emoji={Boolean(f.emoji)}>{f.emoji}{f.label}</BranchLabel>
                    <Count $round={f.count < 10}>{f.count}</Count>
                  </Branch>
                ))}
                <Branch $open>
                  <Chevron dir="down" size={13} width={1.5} />
                  <FolderSlot><FolderOpenShape /></FolderSlot>
                  <BranchLabel>混元视频生成器</BranchLabel>
                  <Count $plain>32</Count>
                </Branch>
                {leaves.map((name) => <Leaf key={name}><span>{name}</span></Leaf>)}
              </Tree>
              <TreeThumb />
            </Panel>
            <PanelMarker />
          </PanelShell>

          <Canvas>
            <NodeGraph />
            <CanvasTools>
              <CanvasButton $on aria-label="Select"><MousePointer2 size={19} strokeWidth={1.8} /></CanvasButton>
              <CanvasButton $width={42} aria-label="Pan"><Hand size={19} strokeWidth={1.8} /></CanvasButton>
              <Divider />
              <CanvasButton $width={38} aria-label="Fit view"><FocusIcon /></CanvasButton>
              <CanvasButton $width={66}>37%<Chevron dir="down" size={9} width={1.5} /></CanvasButton>
              <Divider />
              <CanvasButton $width={38} aria-label="Tips"><Lightbulb size={20} strokeWidth={1.8} /></CanvasButton>
              <CanvasButton $width={40} aria-label="Toggle links"><LinkOffIcon /></CanvasButton>
            </CanvasTools>
            <Watermark>掘金技术社区 @ Xxtaoaooo</Watermark>
          </Canvas>
        </Workspace>

        <BottomBar>
          <ResizeFeed><Line size={10} width={1.2} box="0 0 10 10"><path d="M1 0v4M2 2h6M4 0L2 2l2 2M2 7h6M6 5l2 2-2 2" /></Line>Resize Feed</ResizeFeed>
          <FeedActions>
            <FeedAction>清空</FeedAction>
            <FeedAction $close aria-label="Close"><X size={15} strokeWidth={3} /></FeedAction>
          </FeedActions>
        </BottomBar>
      </Page>

      <VerticalScroll>
        <Arrow d="M0 7l5-7 5 7z" />
        <VerticalThumb />
        <Arrow d="M0 1h10L5 8z" />
      </VerticalScroll>
      <HorizontalScroll>
        <Arrow d="M8 0v8L2 4z" />
        <Arrow d="M2 0v8l6-4z" />
      </HorizontalScroll>
    </Viewport>
  );
}
